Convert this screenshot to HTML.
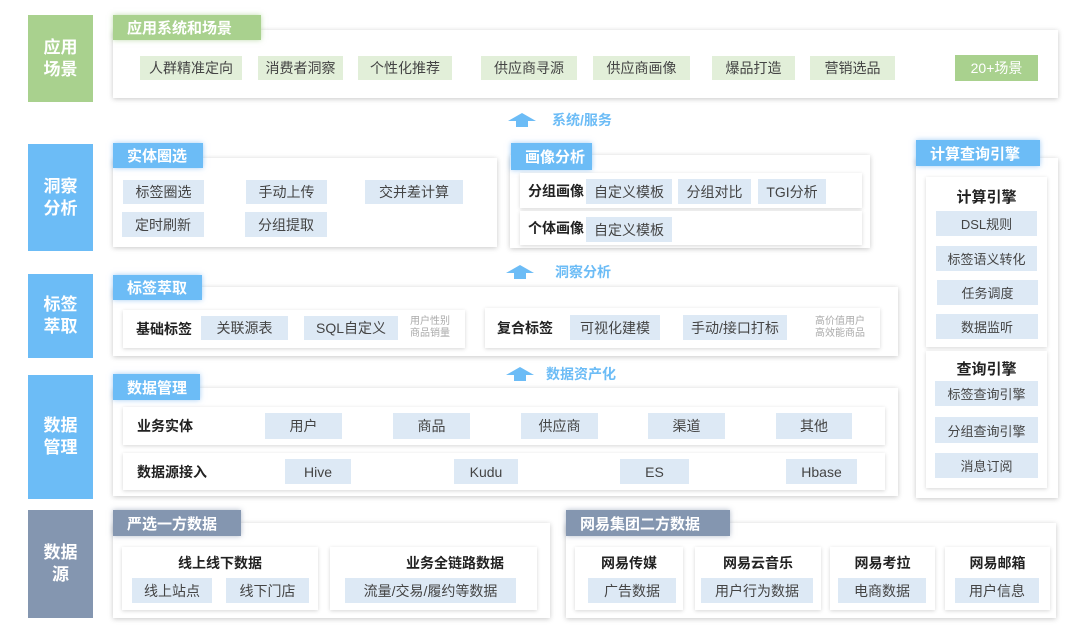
<!DOCTYPE html>
<html><head><meta charset="utf-8">
<style>
*{margin:0;padding:0;box-sizing:border-box}
body{width:1080px;height:631px;background:#fff;position:relative;overflow:hidden;font-family:"Liberation Sans","Noto Sans CJK SC",sans-serif;color:#444}
div{position:absolute}
.L{color:#fff;font-weight:bold;font-size:17px;line-height:22px;text-align:center;display:flex;align-items:center;justify-content:center}
.p{background:#fff;box-shadow:0 1px 5px rgba(0,0,0,.22)}
.i{background:#fff;box-shadow:0 1px 4px rgba(0,0,0,.16)}
.t{color:#fff;font-weight:bold;font-size:15px;display:flex;align-items:center;padding-left:14px;box-shadow:0 0 5px rgba(100,170,240,.6)}
.tb{background:#6cbcf6}
.tg{background:#a9d18e;box-shadow:0 0 5px rgba(150,200,120,.6)}
.ts{background:#8496b0;box-shadow:0 0 5px rgba(100,120,150,.5)}
.c{background:#dde9f5;font-size:14px;display:flex;align-items:center;justify-content:center;color:#444}
.g{background:#e2efd9}
.b{font-weight:bold;font-size:14px;color:#222;display:flex;align-items:center}
.s{font-size:10px;color:#aaa;line-height:12px}
.ar{color:#6cbcf6;font-size:14px;font-weight:bold;display:flex;align-items:center}
</style></head><body>
<!-- left labels -->
<div class="L" style="left:28px;top:15px;width:65px;height:87px;background:#a9d18e">应用<br>场景</div>
<div class="L" style="left:28px;top:144px;width:65px;height:107px;background:#6cbcf6">洞察<br>分析</div>
<div class="L" style="left:28px;top:274px;width:65px;height:84px;background:#6cbcf6">标签<br>萃取</div>
<div class="L" style="left:28px;top:375px;width:65px;height:124px;background:#6cbcf6">数据<br>管理</div>
<div class="L" style="left:28px;top:510px;width:65px;height:108px;background:#8496b0">数据<br>源</div>

<!-- app -->
<div class="p" style="left:113px;top:30px;width:945px;height:68px"></div>
<div class="t tg" style="left:113px;top:15px;width:148px;height:25px">应用系统和场景</div>
<div class="c g" style="left:140px;top:56px;width:102px;height:24px">人群精准定向</div>
<div class="c g" style="left:258px;top:56px;width:85px;height:24px">消费者洞察</div>
<div class="c g" style="left:358px;top:56px;width:94px;height:24px">个性化推荐</div>
<div class="c g" style="left:481px;top:56px;width:96px;height:24px">供应商寻源</div>
<div class="c g" style="left:593px;top:56px;width:97px;height:24px">供应商画像</div>
<div class="c g" style="left:712px;top:56px;width:83px;height:24px">爆品打造</div>
<div class="c g" style="left:810px;top:56px;width:85px;height:24px">营销选品</div>
<div class="c" style="left:955px;top:55px;width:83px;height:26px;background:#a9d18e;color:#fff">20+场景</div>

<!-- arrows -->
<div class="ar" style="left:508px;top:110px;height:20px"><svg width="28" height="14" viewBox="0 0 28 14"><path d="M0 8 L14 0 L28 8 L20 8 L20 14 L8 14 L8 8Z" fill="#6cbcf6"/></svg><span style="margin-left:16px">系统/服务</span></div>
<div class="ar" style="left:506px;top:262px;height:20px"><svg width="28" height="14" viewBox="0 0 28 14"><path d="M0 8 L14 0 L28 8 L20 8 L20 14 L8 14 L8 8Z" fill="#6cbcf6"/></svg><span style="margin-left:21px">洞察分析</span></div>
<div class="ar" style="left:506px;top:364px;height:20px"><svg width="28" height="14" viewBox="0 0 28 14"><path d="M0 8 L14 0 L28 8 L20 8 L20 14 L8 14 L8 8Z" fill="#6cbcf6"/></svg><span style="margin-left:12px">数据资产化</span></div>

<!-- 实体圈选 -->
<div class="p" style="left:113px;top:158px;width:384px;height:89px"></div>
<div class="t tb" style="left:113px;top:143px;width:90px;height:25px">实体圈选</div>
<div class="c" style="left:123px;top:180px;width:81px;height:24px">标签圈选</div>
<div class="c" style="left:246px;top:180px;width:81px;height:24px">手动上传</div>
<div class="c" style="left:365px;top:180px;width:98px;height:24px">交并差计算</div>
<div class="c" style="left:122px;top:212px;width:82px;height:25px">定时刷新</div>
<div class="c" style="left:245px;top:212px;width:82px;height:25px">分组提取</div>

<!-- 画像分析 -->
<div class="p" style="left:510px;top:155px;width:360px;height:93px"></div>
<div class="t tb" style="left:511px;top:143px;width:81px;height:27px">画像分析</div>
<div class="i" style="left:520px;top:173px;width:342px;height:35px"></div>
<div class="b" style="left:528px;top:173px;height:35px">分组画像</div>
<div class="c" style="left:586px;top:179px;width:86px;height:25px">自定义模板</div>
<div class="c" style="left:678px;top:179px;width:73px;height:25px">分组对比</div>
<div class="c" style="left:758px;top:179px;width:68px;height:25px">TGI分析</div>
<div class="i" style="left:520px;top:211px;width:342px;height:34px"></div>
<div class="b" style="left:528px;top:211px;height:34px">个体画像</div>
<div class="c" style="left:586px;top:217px;width:86px;height:25px">自定义模板</div>

<!-- 计算查询引擎 -->
<div class="p" style="left:916px;top:158px;width:142px;height:340px"></div>
<div class="t tb" style="left:916px;top:140px;width:124px;height:26px">计算查询引擎</div>
<div class="i" style="left:926px;top:177px;width:121px;height:170px"></div>
<div class="b" style="left:926px;top:186px;width:121px;justify-content:center;font-size:15px">计算引擎</div>
<div class="c" style="left:936px;top:211px;width:101px;height:25px;font-size:13px">DSL规则</div>
<div class="c" style="left:936px;top:246px;width:101px;height:25px;font-size:13px">标签语义转化</div>
<div class="c" style="left:937px;top:280px;width:101px;height:25px;font-size:13px">任务调度</div>
<div class="c" style="left:936px;top:314px;width:102px;height:25px;font-size:13px">数据监听</div>
<div class="i" style="left:926px;top:351px;width:121px;height:137px"></div>
<div class="b" style="left:926px;top:358px;width:121px;justify-content:center;font-size:15px">查询引擎</div>
<div class="c" style="left:935px;top:381px;width:103px;height:25px;font-size:13px">标签查询引擎</div>
<div class="c" style="left:935px;top:417px;width:103px;height:26px;font-size:13px">分组查询引擎</div>
<div class="c" style="left:935px;top:453px;width:103px;height:25px;font-size:13px">消息订阅</div>

<!-- 标签萃取 -->
<div class="p" style="left:113px;top:287px;width:785px;height:69px"></div>
<div class="t tb" style="left:113px;top:275px;width:89px;height:25px">标签萃取</div>
<div class="i" style="left:123px;top:310px;width:342px;height:38px"></div>
<div class="b" style="left:136px;top:310px;height:38px">基础标签</div>
<div class="c" style="left:201px;top:316px;width:87px;height:24px">关联源表</div>
<div class="c" style="left:304px;top:316px;width:94px;height:24px">SQL自定义</div>
<div class="s" style="left:410px;top:316px">用户性别<br>商品销量</div>
<div class="i" style="left:485px;top:308px;width:395px;height:40px"></div>
<div class="b" style="left:497px;top:308px;height:40px">复合标签</div>
<div class="c" style="left:570px;top:315px;width:90px;height:25px">可视化建模</div>
<div class="c" style="left:683px;top:315px;width:104px;height:25px">手动/接口打标</div>
<div class="s" style="left:815px;top:316px">高价值用户<br>高效能商品</div>

<!-- 数据管理 -->
<div class="p" style="left:113px;top:388px;width:785px;height:108px"></div>
<div class="t tb" style="left:113px;top:374px;width:87px;height:26px">数据管理</div>
<div class="i" style="left:123px;top:407px;width:762px;height:38px"></div>
<div class="b" style="left:137px;top:407px;height:38px">业务实体</div>
<div class="c" style="left:265px;top:413px;width:77px;height:26px">用户</div>
<div class="c" style="left:393px;top:413px;width:77px;height:26px">商品</div>
<div class="c" style="left:521px;top:413px;width:77px;height:26px">供应商</div>
<div class="c" style="left:648px;top:413px;width:77px;height:26px">渠道</div>
<div class="c" style="left:776px;top:413px;width:76px;height:26px">其他</div>
<div class="i" style="left:123px;top:453px;width:762px;height:37px"></div>
<div class="b" style="left:137px;top:453px;height:37px">数据源接入</div>
<div class="c" style="left:285px;top:459px;width:66px;height:25px">Hive</div>
<div class="c" style="left:454px;top:459px;width:64px;height:25px">Kudu</div>
<div class="c" style="left:620px;top:459px;width:69px;height:25px">ES</div>
<div class="c" style="left:786px;top:459px;width:71px;height:25px">Hbase</div>

<!-- 严选一方数据 -->
<div class="p" style="left:113px;top:523px;width:437px;height:95px"></div>
<div class="t ts" style="left:113px;top:510px;width:128px;height:26px">严选一方数据</div>
<div class="i" style="left:122px;top:547px;width:196px;height:63px"></div>
<div class="b" style="left:122px;top:553px;width:196px;justify-content:center">线上线下数据</div>
<div class="c" style="left:132px;top:578px;width:80px;height:25px">线上站点</div>
<div class="c" style="left:226px;top:578px;width:83px;height:25px">线下门店</div>
<div class="i" style="left:330px;top:547px;width:207px;height:63px"></div>
<div class="b" style="left:370px;top:553px;width:170px;justify-content:center">业务全链路数据</div>
<div class="c" style="left:345px;top:578px;width:171px;height:25px">流量/交易/履约等数据</div>

<!-- 网易集团二方数据 -->
<div class="p" style="left:566px;top:523px;width:490px;height:95px"></div>
<div class="t ts" style="left:566px;top:510px;width:164px;height:26px">网易集团二方数据</div>
<div class="i" style="left:575px;top:547px;width:108px;height:63px"></div>
<div class="b" style="left:575px;top:553px;width:108px;justify-content:center">网易传媒</div>
<div class="c" style="left:588px;top:578px;width:828px;width:88px;height:25px">广告数据</div>
<div class="i" style="left:695px;top:547px;width:126px;height:63px"></div>
<div class="b" style="left:695px;top:553px;width:126px;justify-content:center">网易云音乐</div>
<div class="c" style="left:701px;top:578px;width:112px;height:25px">用户行为数据</div>
<div class="i" style="left:830px;top:547px;width:105px;height:63px"></div>
<div class="b" style="left:830px;top:553px;width:105px;justify-content:center">网易考拉</div>
<div class="c" style="left:838px;top:578px;width:88px;height:25px">电商数据</div>
<div class="i" style="left:945px;top:547px;width:105px;height:63px"></div>
<div class="b" style="left:945px;top:553px;width:105px;justify-content:center">网易邮箱</div>
<div class="c" style="left:955px;top:578px;width:84px;height:25px">用户信息</div>
</body></html>
